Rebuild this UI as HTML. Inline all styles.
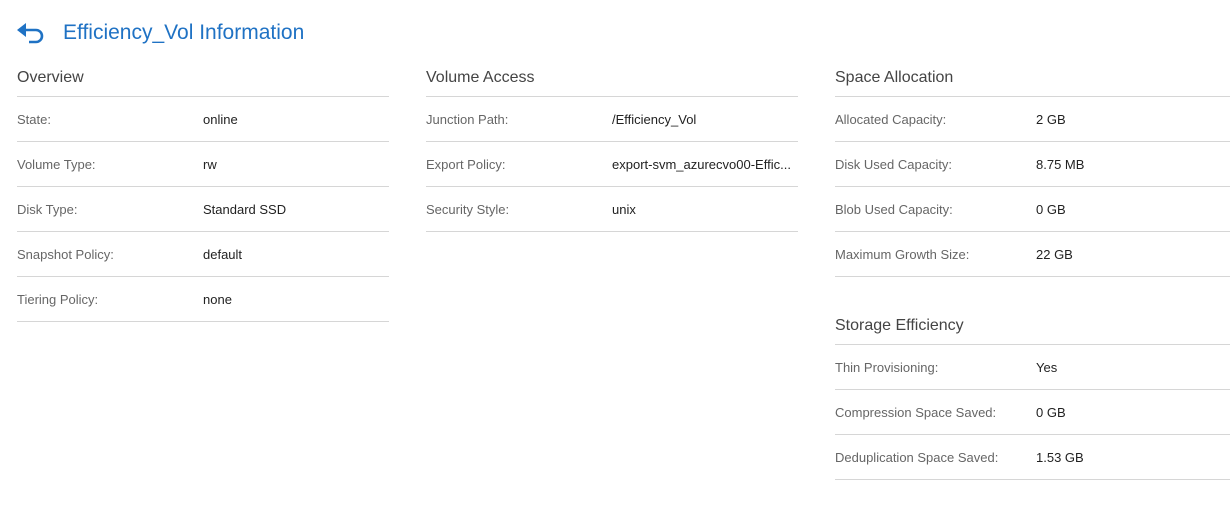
<!DOCTYPE html>
<html><head><meta charset="utf-8"><style>
body{margin:0;width:1230px;height:509px;background:#fff;font-family:"Liberation Sans",sans-serif;position:relative;overflow:hidden}
.t{position:absolute;left:63px;top:20px;font-size:21px;color:#1f72c4;line-height:26px}
.col{position:absolute}
.h{height:38px;line-height:40px;font-size:16px;color:#444;border-bottom:1px solid #d6d6d6;margin-top:58px}
.r{height:44px;line-height:46px;border-bottom:1px solid #d6d6d6;font-size:13px;position:relative;white-space:nowrap}
.l{color:#666}
.v{position:absolute;top:0;color:#222}
</style></head><body>
<svg style="position:absolute;left:17px;top:22px" width="28" height="22" viewBox="0 0 28 22"><path d="M8 8 H19 a6 6 0 0 1 0 12 H12" fill="none" stroke="#1f72c4" stroke-width="2.6"/><path d="M0 8 L9 1 V15 Z" fill="#1f72c4"/></svg>
<div class="t">Efficiency_Vol Information</div>
<div class="col" style="left:17px;top:0;width:372px">
<div class="h">Overview</div>
<div class="r"><span class="l">State:</span><span class="v" style="left:186px">online</span></div>
<div class="r"><span class="l">Volume Type:</span><span class="v" style="left:186px">rw</span></div>
<div class="r"><span class="l">Disk Type:</span><span class="v" style="left:186px">Standard SSD</span></div>
<div class="r"><span class="l">Snapshot Policy:</span><span class="v" style="left:186px">default</span></div>
<div class="r"><span class="l">Tiering Policy:</span><span class="v" style="left:186px">none</span></div>
</div>
<div class="col" style="left:426px;top:0;width:372px">
<div class="h">Volume Access</div>
<div class="r"><span class="l">Junction Path:</span><span class="v" style="left:186px">/Efficiency_Vol</span></div>
<div class="r"><span class="l">Export Policy:</span><span class="v" style="left:186px">export-svm_azurecvo00-Effic...</span></div>
<div class="r"><span class="l">Security Style:</span><span class="v" style="left:186px">unix</span></div>
</div>
<div class="col" style="left:835px;top:0;width:395px">
<div class="h">Space Allocation</div>
<div class="r"><span class="l">Allocated Capacity:</span><span class="v" style="left:201px">2 GB</span></div>
<div class="r"><span class="l">Disk Used Capacity:</span><span class="v" style="left:201px">8.75 MB</span></div>
<div class="r"><span class="l">Blob Used Capacity:</span><span class="v" style="left:201px">0 GB</span></div>
<div class="r"><span class="l">Maximum Growth Size:</span><span class="v" style="left:201px">22 GB</span></div>
<div class="h" style="margin-top:29px">Storage Efficiency</div>
<div class="r"><span class="l">Thin Provisioning:</span><span class="v" style="left:201px">Yes</span></div>
<div class="r"><span class="l">Compression Space Saved:</span><span class="v" style="left:201px">0 GB</span></div>
<div class="r"><span class="l">Deduplication Space Saved:</span><span class="v" style="left:201px">1.53 GB</span></div>
</div>
</body></html>
